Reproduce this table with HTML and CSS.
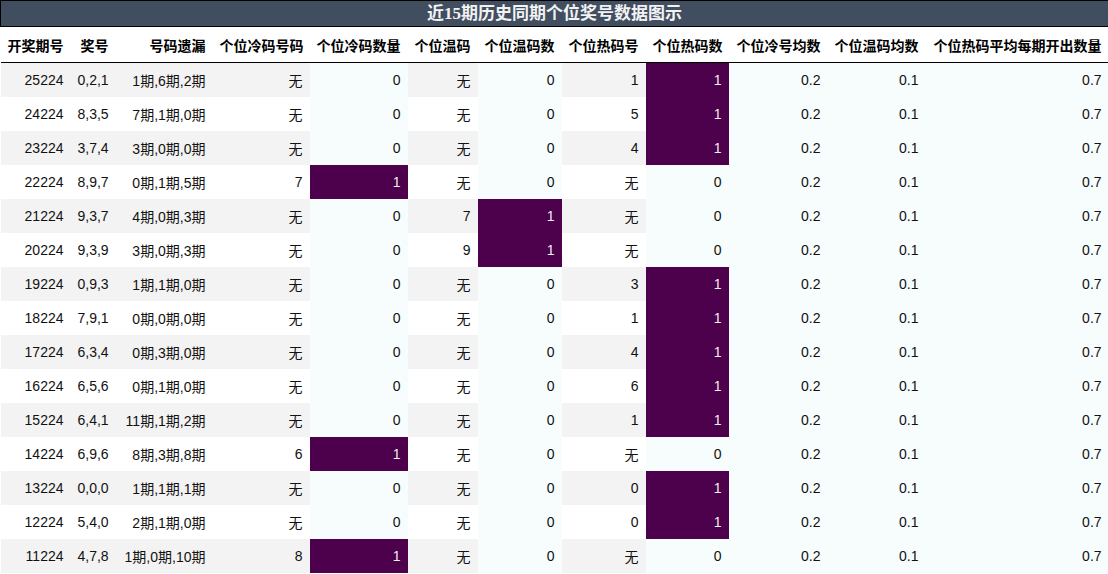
FILE: index.html
```html
<!DOCTYPE html>
<html lang="zh">
<head>
<meta charset="utf-8">
<title>近15期历史同期个位奖号数据图示</title>
<link rel="stylesheet" href="styles.css">
</head>
<body>
<table class="tbl">
<colgroup>
<col class="c1"><col class="c2"><col class="c3"><col class="c4"><col class="c5"><col class="c6"><col class="c7"><col class="c8"><col class="c9"><col class="c10"><col class="c11"><col class="c12">
</colgroup>
<thead>
<tr><th class="title" colspan="12">近15期历史同期个位奖号数据图示</th></tr>
<tr class="hdr">
<th>开奖期号</th><th>奖号</th><th>号码遗漏</th><th>个位冷码号码</th><th>个位冷码数量</th><th>个位温码</th><th>个位温码数</th><th>个位热码号</th><th>个位热码数</th><th>个位冷号均数</th><th>个位温码均数</th><th>个位热码平均每期开出数量</th>
</tr>
</thead>
<tbody>
<tr><td>25224</td><td>0,2,1</td><td>1期,6期,2期</td><td>无</td><td class="lo">0</td><td>无</td><td class="lo">0</td><td>1</td><td class="hi">1</td><td class="lo">0.2</td><td class="lo">0.1</td><td class="lo">0.7</td></tr>
<tr><td>24224</td><td>8,3,5</td><td>7期,1期,0期</td><td>无</td><td class="lo">0</td><td>无</td><td class="lo">0</td><td>5</td><td class="hi">1</td><td class="lo">0.2</td><td class="lo">0.1</td><td class="lo">0.7</td></tr>
<tr><td>23224</td><td>3,7,4</td><td>3期,0期,0期</td><td>无</td><td class="lo">0</td><td>无</td><td class="lo">0</td><td>4</td><td class="hi">1</td><td class="lo">0.2</td><td class="lo">0.1</td><td class="lo">0.7</td></tr>
<tr><td>22224</td><td>8,9,7</td><td>0期,1期,5期</td><td>7</td><td class="hi">1</td><td>无</td><td class="lo">0</td><td>无</td><td class="lo">0</td><td class="lo">0.2</td><td class="lo">0.1</td><td class="lo">0.7</td></tr>
<tr><td>21224</td><td>9,3,7</td><td>4期,0期,3期</td><td>无</td><td class="lo">0</td><td>7</td><td class="hi">1</td><td>无</td><td class="lo">0</td><td class="lo">0.2</td><td class="lo">0.1</td><td class="lo">0.7</td></tr>
<tr><td>20224</td><td>9,3,9</td><td>3期,0期,3期</td><td>无</td><td class="lo">0</td><td>9</td><td class="hi">1</td><td>无</td><td class="lo">0</td><td class="lo">0.2</td><td class="lo">0.1</td><td class="lo">0.7</td></tr>
<tr><td>19224</td><td>0,9,3</td><td>1期,1期,0期</td><td>无</td><td class="lo">0</td><td>无</td><td class="lo">0</td><td>3</td><td class="hi">1</td><td class="lo">0.2</td><td class="lo">0.1</td><td class="lo">0.7</td></tr>
<tr><td>18224</td><td>7,9,1</td><td>0期,0期,0期</td><td>无</td><td class="lo">0</td><td>无</td><td class="lo">0</td><td>1</td><td class="hi">1</td><td class="lo">0.2</td><td class="lo">0.1</td><td class="lo">0.7</td></tr>
<tr><td>17224</td><td>6,3,4</td><td>0期,3期,0期</td><td>无</td><td class="lo">0</td><td>无</td><td class="lo">0</td><td>4</td><td class="hi">1</td><td class="lo">0.2</td><td class="lo">0.1</td><td class="lo">0.7</td></tr>
<tr><td>16224</td><td>6,5,6</td><td>0期,1期,0期</td><td>无</td><td class="lo">0</td><td>无</td><td class="lo">0</td><td>6</td><td class="hi">1</td><td class="lo">0.2</td><td class="lo">0.1</td><td class="lo">0.7</td></tr>
<tr><td>15224</td><td>6,4,1</td><td>11期,1期,2期</td><td>无</td><td class="lo">0</td><td>无</td><td class="lo">0</td><td>1</td><td class="hi">1</td><td class="lo">0.2</td><td class="lo">0.1</td><td class="lo">0.7</td></tr>
<tr><td>14224</td><td>6,9,6</td><td>8期,3期,8期</td><td>6</td><td class="hi">1</td><td>无</td><td class="lo">0</td><td>无</td><td class="lo">0</td><td class="lo">0.2</td><td class="lo">0.1</td><td class="lo">0.7</td></tr>
<tr><td>13224</td><td>0,0,0</td><td>1期,1期,1期</td><td>无</td><td class="lo">0</td><td>无</td><td class="lo">0</td><td>0</td><td class="hi">1</td><td class="lo">0.2</td><td class="lo">0.1</td><td class="lo">0.7</td></tr>
<tr><td>12224</td><td>5,4,0</td><td>2期,1期,0期</td><td>无</td><td class="lo">0</td><td>无</td><td class="lo">0</td><td>0</td><td class="hi">1</td><td class="lo">0.2</td><td class="lo">0.1</td><td class="lo">0.7</td></tr>
<tr><td>11224</td><td>4,7,8</td><td>1期,0期,10期</td><td>8</td><td class="hi">1</td><td>无</td><td class="lo">0</td><td>无</td><td class="lo">0</td><td class="lo">0.2</td><td class="lo">0.1</td><td class="lo">0.7</td></tr>
</tbody>
</table>
</body>
</html>
```
FILE: styles.css
```css
html, body {
  margin: 0;
  padding: 0;
  background: #ffffff;
}

.tbl {
  border-collapse: collapse;
  table-layout: fixed;
  width: 1108px;
  font-family: "Liberation Sans", "Noto Sans CJK SC", sans-serif;
  font-size: 14px;
  color: #111111;
}

.c1 { width: 70px; }
.c2 { width: 45px; }
.c3 { width: 97px; }
.c4 { width: 97px; }
.c5 { width: 98px; }
.c6 { width: 70px; }
.c7 { width: 84px; }
.c8 { width: 84px; }
.c9 { width: 83px; }
.c10 { width: 99px; }
.c11 { width: 98px; }
.c12 { width: 183px; }

.title {
  height: 25px;
  padding: 0;
  border: 1px solid #000000;
  background: #414e60;
  color: #f2f2f2;
  font-family: "Liberation Serif", "Noto Sans CJK SC", serif;
  font-size: 17px;
  font-weight: bold;
  text-align: center;
  line-height: 25px;
}

.hdr th {
  height: 34px;
  padding: 1px 7px 0 7px;
  border-bottom: 1px solid #000000;
  text-align: right;
  font-weight: bold;
  color: #000000;
  white-space: nowrap;
}

.tbl td {
  height: 34px;
  padding: 0 7px;
  text-align: right;
  white-space: nowrap;
  background: #ffffff;
}

.tbl tbody tr:nth-child(odd) td {
  background: #f3f3f3;
}

.tbl tbody tr td.lo {
  background: #f7fcfd;
  color: #111111;
}

.tbl tbody tr td.hi {
  background: #4d004b;
  color: #f1f1f1;
}
```
